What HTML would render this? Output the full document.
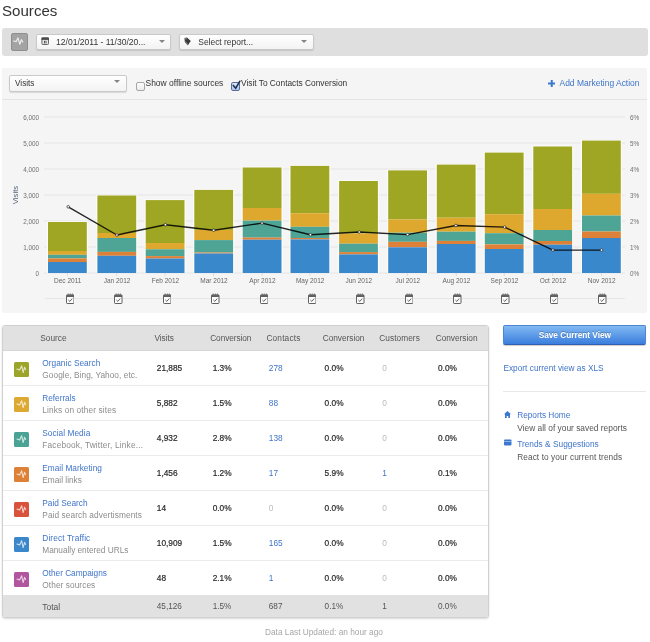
<!DOCTYPE html>
<html><head><meta charset="utf-8">
<style>
html,body{margin:0;padding:0;background:#fff;}
body{width:650px;height:642px;position:relative;overflow:hidden;font-family:"Liberation Sans",sans-serif;}
.t{position:absolute;white-space:nowrap;}
.dd{position:absolute;background:linear-gradient(#ffffff,#f3f3f3);border:1px solid #c9c9c9;border-radius:2px;box-shadow:0 1px 1px rgba(0,0,0,0.12);box-sizing:border-box;}
.arr{position:absolute;width:0;height:0;border-left:3px solid transparent;border-right:3px solid transparent;border-top:3.8px solid #858585;}
</style></head><body><div id="wrap" style="position:absolute;left:0;top:0;width:650px;height:642px;filter:blur(0.55px)">
<div class="t" style="left:2.00px;top:3.02px;font-size:15.1px;line-height:15.1px;color:#333;font-weight:400;">Sources</div>
<div style="position:absolute;left:2px;top:28px;width:646px;height:28px;background:#dfdfdf;border-radius:3px"></div>
<div style="position:absolute;left:11px;top:33px;width:17px;height:18px;background:#a3a3a3;border:1px solid #8e8e8e;border-radius:2px;box-sizing:border-box"><svg width="17" height="18" viewBox="0 0 17 18" style="position:absolute;left:-1px;top:-1px"><path d="M2.6 8 L5.2 8.6 L6.9 4.9 L8.8 11.2 L10.3 6.7 L11.8 9" fill="none" stroke="#ececec" stroke-width="1.2" stroke-linejoin="round" stroke-linecap="round"/></svg></div>
<div class="dd" style="left:35.5px;top:33.5px;width:135px;height:16px"></div>
<svg style="position:absolute;left:41px;top:37px" width="8" height="8" viewBox="0 0 8 8"><rect x="0.9" y="0.9" width="6.6" height="6.6" rx="0.8" fill="#e4e4e4" stroke="#5a5a5a" stroke-width="0.9"/><rect x="0.5" y="0.5" width="7.4" height="2.4" fill="#4a4a4a"/><rect x="3.2" y="3.8" width="0.8" height="2.6" fill="#333"/><rect x="4.6" y="3.8" width="0.8" height="2.6" fill="#333"/></svg>
<div class="t" style="left:56.00px;top:38.36px;font-size:8.55px;line-height:8.55px;color:#333;font-weight:400;">12/01/2011 - 11/30/20...</div>
<div class="arr" style="left:159px;top:39.8px"></div>
<div class="dd" style="left:178.5px;top:33.5px;width:135px;height:16px"></div>
<svg style="position:absolute;left:183.5px;top:36.5px" width="8" height="9" viewBox="0 0 8 9"><path d="M0.5 1 L3 0.5 L6.8 4 L3.8 8.3 L0.8 5 Z" fill="#3a3a3a"/><path d="M0.8 5 L3.8 8.3 L4.5 7.3 L1.2 3.8 Z" fill="#777"/><circle cx="2" cy="1.8" r="0.6" fill="#ddd"/></svg>
<div class="t" style="left:198.30px;top:38.46px;font-size:8.44px;line-height:8.44px;color:#333;font-weight:400;">Select report...</div>
<div class="arr" style="left:301px;top:39.8px"></div>
<div style="position:absolute;left:2px;top:68px;width:645px;height:245px;background:#f5f5f5;border-radius:2px"></div>
<div style="position:absolute;left:2px;top:99px;width:645px;height:1px;background:#e4e4e4"></div>
<div class="dd" style="left:9px;top:74.5px;width:117.5px;height:17px"></div>
<div class="t" style="left:15.00px;top:80.16px;font-size:8.2px;line-height:8.2px;color:#333;font-weight:400;">Visits</div>
<div class="arr" style="left:114px;top:80.3px"></div>
<div style="position:absolute;left:136px;top:81.5px;width:9px;height:9px;border:1px solid #a5a5a5;border-radius:2px;background:linear-gradient(#fdfdfd,#ececec);box-sizing:border-box"></div>
<div class="t" style="left:145.50px;top:79.14px;font-size:8.46px;line-height:8.46px;color:#333;font-weight:400;">Show offline sources</div>
<div style="position:absolute;left:231px;top:81.5px;width:9px;height:9px;border:1px solid #5a6c98;border-radius:2px;background:linear-gradient(#dbe9fa,#a9c7ee);box-sizing:border-box"></div>
<svg style="position:absolute;left:231px;top:78px" width="11" height="13" viewBox="0 0 11 13"><path d="M2.3 7.4 L4.7 10.2 L8.9 3.2" fill="none" stroke="#1b2a48" stroke-width="1.5" stroke-linecap="round"/></svg>
<div class="t" style="left:241.00px;top:79.25px;font-size:8.33px;line-height:8.33px;color:#333;font-weight:400;">Visit To Contacts Conversion</div>
<svg style="position:absolute;left:547.5px;top:79.6px" width="7.5" height="7" viewBox="0 0 7.5 7"><rect x="2.75" y="0" width="2" height="7" fill="#3d78d0"/><rect x="0" y="2.5" width="7.5" height="2" fill="#3d78d0"/></svg>
<div class="t" style="left:559.50px;top:79.03px;font-size:8.47px;line-height:8.47px;color:#3d74c8;font-weight:400;">Add Marketing Action</div>
<svg style="position:absolute;left:0;top:0" width="650" height="320" viewBox="0 0 650 320">
<rect x="44" y="272.5" width="581" height="1" fill="#e6e6e6"/>
<rect x="44" y="246.5" width="581" height="1" fill="#e6e6e6"/>
<rect x="44" y="220.5" width="581" height="1" fill="#e6e6e6"/>
<rect x="44" y="194.5" width="581" height="1" fill="#e6e6e6"/>
<rect x="44" y="168.5" width="581" height="1" fill="#e6e6e6"/>
<rect x="44" y="142.5" width="581" height="1" fill="#e6e6e6"/>
<rect x="44" y="116.5" width="581" height="1" fill="#e6e6e6"/>
<rect x="46.90" y="221.40" width="41.00" height="51.60" fill="#fdfdf8"/>
<rect x="48.0" y="222" width="38.8" height="29.00" fill="#9fa623"/>
<rect x="48.0" y="251" width="38.8" height="3.80" fill="#dea82f"/>
<rect x="48.0" y="254.8" width="38.8" height="3.60" fill="#4ea596"/>
<rect x="48.0" y="258.4" width="38.8" height="3.60" fill="#dc8137"/>
<rect x="48.0" y="262" width="38.8" height="11.00" fill="#3a88cc"/>
<rect x="96.30" y="194.90" width="41.00" height="78.10" fill="#fdfdf8"/>
<rect x="97.4" y="195.5" width="38.8" height="37.50" fill="#9fa623"/>
<rect x="97.4" y="233" width="38.8" height="5.00" fill="#dea82f"/>
<rect x="97.4" y="238" width="38.8" height="13.90" fill="#4ea596"/>
<rect x="97.4" y="251.9" width="38.8" height="3.90" fill="#dc8137"/>
<rect x="97.4" y="255.8" width="38.8" height="17.20" fill="#3a88cc"/>
<rect x="144.60" y="199.50" width="41.00" height="73.50" fill="#fdfdf8"/>
<rect x="145.7" y="200.1" width="38.8" height="42.90" fill="#9fa623"/>
<rect x="145.7" y="243" width="38.8" height="6.30" fill="#dea82f"/>
<rect x="145.7" y="249.3" width="38.8" height="6.80" fill="#4ea596"/>
<rect x="145.7" y="256.1" width="38.8" height="2.40" fill="#dc8137"/>
<rect x="145.7" y="258.5" width="38.8" height="14.50" fill="#3a88cc"/>
<rect x="193.20" y="189.30" width="41.00" height="83.70" fill="#fdfdf8"/>
<rect x="194.3" y="189.9" width="38.8" height="40.00" fill="#9fa623"/>
<rect x="194.3" y="229.9" width="38.8" height="10.20" fill="#dea82f"/>
<rect x="194.3" y="240.1" width="38.8" height="12.40" fill="#4ea596"/>
<rect x="194.3" y="252.5" width="38.8" height="1.00" fill="#dc8137"/>
<rect x="194.3" y="253.5" width="38.8" height="19.50" fill="#3a88cc"/>
<rect x="241.60" y="166.90" width="41.00" height="106.10" fill="#fdfdf8"/>
<rect x="242.7" y="167.5" width="38.8" height="40.50" fill="#9fa623"/>
<rect x="242.7" y="208" width="38.8" height="12.60" fill="#dea82f"/>
<rect x="242.7" y="220.6" width="38.8" height="17.00" fill="#4ea596"/>
<rect x="242.7" y="237.6" width="38.8" height="2.10" fill="#dc8137"/>
<rect x="242.7" y="239.7" width="38.8" height="33.30" fill="#3a88cc"/>
<rect x="289.40" y="165.30" width="41.00" height="107.70" fill="#fdfdf8"/>
<rect x="290.5" y="165.9" width="38.8" height="47.30" fill="#9fa623"/>
<rect x="290.5" y="213.2" width="38.8" height="13.60" fill="#dea82f"/>
<rect x="290.5" y="226.8" width="38.8" height="11.20" fill="#4ea596"/>
<rect x="290.5" y="238" width="38.8" height="1.40" fill="#dc8137"/>
<rect x="290.5" y="239.4" width="38.8" height="33.60" fill="#3a88cc"/>
<rect x="338.00" y="180.40" width="41.00" height="92.60" fill="#fdfdf8"/>
<rect x="339.1" y="181" width="38.8" height="52.50" fill="#9fa623"/>
<rect x="339.1" y="233.5" width="38.8" height="10.20" fill="#dea82f"/>
<rect x="339.1" y="243.7" width="38.8" height="8.40" fill="#4ea596"/>
<rect x="339.1" y="252.1" width="38.8" height="2.30" fill="#dc8137"/>
<rect x="339.1" y="254.4" width="38.8" height="18.60" fill="#3a88cc"/>
<rect x="387.10" y="169.80" width="41.00" height="103.20" fill="#fdfdf8"/>
<rect x="388.2" y="170.4" width="38.8" height="49.10" fill="#9fa623"/>
<rect x="388.2" y="219.5" width="38.8" height="13.20" fill="#dea82f"/>
<rect x="388.2" y="232.7" width="38.8" height="9.10" fill="#4ea596"/>
<rect x="388.2" y="241.8" width="38.8" height="5.50" fill="#dc8137"/>
<rect x="388.2" y="247.3" width="38.8" height="25.70" fill="#3a88cc"/>
<rect x="435.70" y="164.00" width="41.00" height="109.00" fill="#fdfdf8"/>
<rect x="436.8" y="164.6" width="38.8" height="53.10" fill="#9fa623"/>
<rect x="436.8" y="217.7" width="38.8" height="14.00" fill="#dea82f"/>
<rect x="436.8" y="231.7" width="38.8" height="9.20" fill="#4ea596"/>
<rect x="436.8" y="240.9" width="38.8" height="3.10" fill="#dc8137"/>
<rect x="436.8" y="244" width="38.8" height="29.00" fill="#3a88cc"/>
<rect x="483.70" y="152.00" width="41.00" height="121.00" fill="#fdfdf8"/>
<rect x="484.8" y="152.6" width="38.8" height="61.60" fill="#9fa623"/>
<rect x="484.8" y="214.2" width="38.8" height="19.00" fill="#dea82f"/>
<rect x="484.8" y="233.2" width="38.8" height="11.20" fill="#4ea596"/>
<rect x="484.8" y="244.4" width="38.8" height="4.60" fill="#dc8137"/>
<rect x="484.8" y="249" width="38.8" height="24.00" fill="#3a88cc"/>
<rect x="532.20" y="145.90" width="41.00" height="127.10" fill="#fdfdf8"/>
<rect x="533.3" y="146.5" width="38.8" height="62.50" fill="#9fa623"/>
<rect x="533.3" y="209" width="38.8" height="21.00" fill="#dea82f"/>
<rect x="533.3" y="230" width="38.8" height="11.00" fill="#4ea596"/>
<rect x="533.3" y="241" width="38.8" height="3.70" fill="#dc8137"/>
<rect x="533.3" y="244.7" width="38.8" height="28.30" fill="#3a88cc"/>
<rect x="580.90" y="140.00" width="41.00" height="133.00" fill="#fdfdf8"/>
<rect x="582.0" y="140.6" width="38.8" height="53.20" fill="#9fa623"/>
<rect x="582.0" y="193.8" width="38.8" height="21.70" fill="#dea82f"/>
<rect x="582.0" y="215.5" width="38.8" height="16.00" fill="#4ea596"/>
<rect x="582.0" y="231.5" width="38.8" height="6.50" fill="#dc8137"/>
<rect x="582.0" y="238" width="38.8" height="35.00" fill="#3a88cc"/>
<polyline points="68.2,206.8 116.9,235 165.4,224.7 213.7,230.3 262,223.1 310.4,234.7 359.2,232 407.6,234.6 455.9,225.5 504.6,227.1 552.9,250.1 601.5,250.1" fill="none" stroke="#000" stroke-opacity="0.85" stroke-width="1.4" stroke-linejoin="round"/>
<circle cx="68.2" cy="206.8" r="1.3" fill="#fff" stroke="#222" stroke-width="0.7"/>
<circle cx="116.9" cy="235" r="1.3" fill="#fff" stroke="#222" stroke-width="0.7"/>
<circle cx="165.4" cy="224.7" r="1.3" fill="#fff" stroke="#222" stroke-width="0.7"/>
<circle cx="213.7" cy="230.3" r="1.3" fill="#fff" stroke="#222" stroke-width="0.7"/>
<circle cx="262" cy="223.1" r="1.3" fill="#fff" stroke="#222" stroke-width="0.7"/>
<circle cx="310.4" cy="234.7" r="1.3" fill="#fff" stroke="#222" stroke-width="0.7"/>
<circle cx="359.2" cy="232" r="1.3" fill="#fff" stroke="#222" stroke-width="0.7"/>
<circle cx="407.6" cy="234.6" r="1.3" fill="#fff" stroke="#222" stroke-width="0.7"/>
<circle cx="455.9" cy="225.5" r="1.3" fill="#fff" stroke="#222" stroke-width="0.7"/>
<circle cx="504.6" cy="227.1" r="1.3" fill="#fff" stroke="#222" stroke-width="0.7"/>
<circle cx="552.9" cy="250.1" r="1.3" fill="#fff" stroke="#222" stroke-width="0.7"/>
<circle cx="601.5" cy="250.1" r="1.3" fill="#fff" stroke="#222" stroke-width="0.7"/>
<rect x="66.90" y="273" width="1" height="3" fill="#dcdcdc"/>
<rect x="116.30" y="273" width="1" height="3" fill="#dcdcdc"/>
<rect x="164.60" y="273" width="1" height="3" fill="#dcdcdc"/>
<rect x="213.20" y="273" width="1" height="3" fill="#dcdcdc"/>
<rect x="261.60" y="273" width="1" height="3" fill="#dcdcdc"/>
<rect x="309.40" y="273" width="1" height="3" fill="#dcdcdc"/>
<rect x="358.00" y="273" width="1" height="3" fill="#dcdcdc"/>
<rect x="407.10" y="273" width="1" height="3" fill="#dcdcdc"/>
<rect x="455.70" y="273" width="1" height="3" fill="#dcdcdc"/>
<rect x="503.70" y="273" width="1" height="3" fill="#dcdcdc"/>
<rect x="552.20" y="273" width="1" height="3" fill="#dcdcdc"/>
<rect x="600.90" y="273" width="1" height="3" fill="#dcdcdc"/>
<rect x="45" y="298" width="580" height="1" fill="#e6e6e6"/>
</svg>
<div class="t" style="right:611.00px;top:271.02px;font-size:6.35px;line-height:6.35px;color:#707070;font-weight:400;text-align:right;">0</div>
<div class="t" style="left:630.00px;top:271.02px;font-size:6.35px;line-height:6.35px;color:#707070;font-weight:400;">0%</div>
<div class="t" style="right:611.00px;top:245.02px;font-size:6.35px;line-height:6.35px;color:#707070;font-weight:400;text-align:right;">1,000</div>
<div class="t" style="left:630.00px;top:245.02px;font-size:6.35px;line-height:6.35px;color:#707070;font-weight:400;">1%</div>
<div class="t" style="right:611.00px;top:219.02px;font-size:6.35px;line-height:6.35px;color:#707070;font-weight:400;text-align:right;">2,000</div>
<div class="t" style="left:630.00px;top:219.02px;font-size:6.35px;line-height:6.35px;color:#707070;font-weight:400;">2%</div>
<div class="t" style="right:611.00px;top:193.02px;font-size:6.35px;line-height:6.35px;color:#707070;font-weight:400;text-align:right;">3,000</div>
<div class="t" style="left:630.00px;top:193.02px;font-size:6.35px;line-height:6.35px;color:#707070;font-weight:400;">3%</div>
<div class="t" style="right:611.00px;top:167.02px;font-size:6.35px;line-height:6.35px;color:#707070;font-weight:400;text-align:right;">4,000</div>
<div class="t" style="left:630.00px;top:167.02px;font-size:6.35px;line-height:6.35px;color:#707070;font-weight:400;">4%</div>
<div class="t" style="right:611.00px;top:141.02px;font-size:6.35px;line-height:6.35px;color:#707070;font-weight:400;text-align:right;">5,000</div>
<div class="t" style="left:630.00px;top:141.02px;font-size:6.35px;line-height:6.35px;color:#707070;font-weight:400;">5%</div>
<div class="t" style="right:611.00px;top:115.02px;font-size:6.35px;line-height:6.35px;color:#707070;font-weight:400;text-align:right;">6,000</div>
<div class="t" style="left:630.00px;top:115.02px;font-size:6.35px;line-height:6.35px;color:#707070;font-weight:400;">6%</div>
<div class="t" style="left:1.1px;top:190.5px;width:30px;height:8px;font-size:7.8px;line-height:8px;color:#56667c;text-align:center;transform:rotate(-90deg);transform-origin:15px 4px">Visits</div>
<div class="t" style="left:-32.30px;width:200px;top:278.30px;font-size:6.5px;line-height:6.5px;color:#666;font-weight:400;text-align:center;">Dec 2011</div>
<svg style="position:absolute;left:65.95px;top:293px" width="8.5" height="11" viewBox="0 0 8.5 11"><rect x="-0.5" y="1" width="9.5" height="10" fill="#f5f5f5"/><rect x="0.5" y="1.9" width="7.5" height="8.6" rx="0.7" fill="#fbfbfb" stroke="#606060" stroke-width="1"/><rect x="0.5" y="1.9" width="7.5" height="2.1" fill="#606060"/><rect x="1.7" y="0.5" width="0.9" height="2" fill="#707070"/><rect x="3.8" y="0.5" width="0.9" height="2" fill="#707070"/><rect x="5.9" y="0.5" width="0.9" height="2" fill="#707070"/><path d="M2.4 7 L3.8 8.4 L6.2 5.6" fill="none" stroke="#505050" stroke-width="0.9"/></svg>
<div class="t" style="left:17.10px;width:200px;top:278.30px;font-size:6.5px;line-height:6.5px;color:#666;font-weight:400;text-align:center;">Jan 2012</div>
<svg style="position:absolute;left:114.34px;top:293px" width="8.5" height="11" viewBox="0 0 8.5 11"><rect x="-0.5" y="1" width="9.5" height="10" fill="#f5f5f5"/><rect x="0.5" y="1.9" width="7.5" height="8.6" rx="0.7" fill="#fbfbfb" stroke="#606060" stroke-width="1"/><rect x="0.5" y="1.9" width="7.5" height="2.1" fill="#606060"/><rect x="1.7" y="0.5" width="0.9" height="2" fill="#707070"/><rect x="3.8" y="0.5" width="0.9" height="2" fill="#707070"/><rect x="5.9" y="0.5" width="0.9" height="2" fill="#707070"/><path d="M2.4 7 L3.8 8.4 L6.2 5.6" fill="none" stroke="#505050" stroke-width="0.9"/></svg>
<div class="t" style="left:65.40px;width:200px;top:278.30px;font-size:6.5px;line-height:6.5px;color:#666;font-weight:400;text-align:center;">Feb 2012</div>
<svg style="position:absolute;left:162.73px;top:293px" width="8.5" height="11" viewBox="0 0 8.5 11"><rect x="-0.5" y="1" width="9.5" height="10" fill="#f5f5f5"/><rect x="0.5" y="1.9" width="7.5" height="8.6" rx="0.7" fill="#fbfbfb" stroke="#606060" stroke-width="1"/><rect x="0.5" y="1.9" width="7.5" height="2.1" fill="#606060"/><rect x="1.7" y="0.5" width="0.9" height="2" fill="#707070"/><rect x="3.8" y="0.5" width="0.9" height="2" fill="#707070"/><rect x="5.9" y="0.5" width="0.9" height="2" fill="#707070"/><path d="M2.4 7 L3.8 8.4 L6.2 5.6" fill="none" stroke="#505050" stroke-width="0.9"/></svg>
<div class="t" style="left:114.00px;width:200px;top:278.30px;font-size:6.5px;line-height:6.5px;color:#666;font-weight:400;text-align:center;">Mar 2012</div>
<svg style="position:absolute;left:211.12px;top:293px" width="8.5" height="11" viewBox="0 0 8.5 11"><rect x="-0.5" y="1" width="9.5" height="10" fill="#f5f5f5"/><rect x="0.5" y="1.9" width="7.5" height="8.6" rx="0.7" fill="#fbfbfb" stroke="#606060" stroke-width="1"/><rect x="0.5" y="1.9" width="7.5" height="2.1" fill="#606060"/><rect x="1.7" y="0.5" width="0.9" height="2" fill="#707070"/><rect x="3.8" y="0.5" width="0.9" height="2" fill="#707070"/><rect x="5.9" y="0.5" width="0.9" height="2" fill="#707070"/><path d="M2.4 7 L3.8 8.4 L6.2 5.6" fill="none" stroke="#505050" stroke-width="0.9"/></svg>
<div class="t" style="left:162.40px;width:200px;top:278.30px;font-size:6.5px;line-height:6.5px;color:#666;font-weight:400;text-align:center;">Apr 2012</div>
<svg style="position:absolute;left:259.51px;top:293px" width="8.5" height="11" viewBox="0 0 8.5 11"><rect x="-0.5" y="1" width="9.5" height="10" fill="#f5f5f5"/><rect x="0.5" y="1.9" width="7.5" height="8.6" rx="0.7" fill="#fbfbfb" stroke="#606060" stroke-width="1"/><rect x="0.5" y="1.9" width="7.5" height="2.1" fill="#606060"/><rect x="1.7" y="0.5" width="0.9" height="2" fill="#707070"/><rect x="3.8" y="0.5" width="0.9" height="2" fill="#707070"/><rect x="5.9" y="0.5" width="0.9" height="2" fill="#707070"/><path d="M2.4 7 L3.8 8.4 L6.2 5.6" fill="none" stroke="#505050" stroke-width="0.9"/></svg>
<div class="t" style="left:210.20px;width:200px;top:278.30px;font-size:6.5px;line-height:6.5px;color:#666;font-weight:400;text-align:center;">May 2012</div>
<svg style="position:absolute;left:307.90px;top:293px" width="8.5" height="11" viewBox="0 0 8.5 11"><rect x="-0.5" y="1" width="9.5" height="10" fill="#f5f5f5"/><rect x="0.5" y="1.9" width="7.5" height="8.6" rx="0.7" fill="#fbfbfb" stroke="#606060" stroke-width="1"/><rect x="0.5" y="1.9" width="7.5" height="2.1" fill="#606060"/><rect x="1.7" y="0.5" width="0.9" height="2" fill="#707070"/><rect x="3.8" y="0.5" width="0.9" height="2" fill="#707070"/><rect x="5.9" y="0.5" width="0.9" height="2" fill="#707070"/><path d="M2.4 7 L3.8 8.4 L6.2 5.6" fill="none" stroke="#505050" stroke-width="0.9"/></svg>
<div class="t" style="left:258.80px;width:200px;top:278.30px;font-size:6.5px;line-height:6.5px;color:#666;font-weight:400;text-align:center;">Jun 2012</div>
<svg style="position:absolute;left:356.29px;top:293px" width="8.5" height="11" viewBox="0 0 8.5 11"><rect x="-0.5" y="1" width="9.5" height="10" fill="#f5f5f5"/><rect x="0.5" y="1.9" width="7.5" height="8.6" rx="0.7" fill="#fbfbfb" stroke="#606060" stroke-width="1"/><rect x="0.5" y="1.9" width="7.5" height="2.1" fill="#606060"/><rect x="1.7" y="0.5" width="0.9" height="2" fill="#707070"/><rect x="3.8" y="0.5" width="0.9" height="2" fill="#707070"/><rect x="5.9" y="0.5" width="0.9" height="2" fill="#707070"/><path d="M2.4 7 L3.8 8.4 L6.2 5.6" fill="none" stroke="#505050" stroke-width="0.9"/></svg>
<div class="t" style="left:307.90px;width:200px;top:278.30px;font-size:6.5px;line-height:6.5px;color:#666;font-weight:400;text-align:center;">Jul 2012</div>
<svg style="position:absolute;left:404.68px;top:293px" width="8.5" height="11" viewBox="0 0 8.5 11"><rect x="-0.5" y="1" width="9.5" height="10" fill="#f5f5f5"/><rect x="0.5" y="1.9" width="7.5" height="8.6" rx="0.7" fill="#fbfbfb" stroke="#606060" stroke-width="1"/><rect x="0.5" y="1.9" width="7.5" height="2.1" fill="#606060"/><rect x="1.7" y="0.5" width="0.9" height="2" fill="#707070"/><rect x="3.8" y="0.5" width="0.9" height="2" fill="#707070"/><rect x="5.9" y="0.5" width="0.9" height="2" fill="#707070"/><path d="M2.4 7 L3.8 8.4 L6.2 5.6" fill="none" stroke="#505050" stroke-width="0.9"/></svg>
<div class="t" style="left:356.50px;width:200px;top:278.30px;font-size:6.5px;line-height:6.5px;color:#666;font-weight:400;text-align:center;">Aug 2012</div>
<svg style="position:absolute;left:453.07px;top:293px" width="8.5" height="11" viewBox="0 0 8.5 11"><rect x="-0.5" y="1" width="9.5" height="10" fill="#f5f5f5"/><rect x="0.5" y="1.9" width="7.5" height="8.6" rx="0.7" fill="#fbfbfb" stroke="#606060" stroke-width="1"/><rect x="0.5" y="1.9" width="7.5" height="2.1" fill="#606060"/><rect x="1.7" y="0.5" width="0.9" height="2" fill="#707070"/><rect x="3.8" y="0.5" width="0.9" height="2" fill="#707070"/><rect x="5.9" y="0.5" width="0.9" height="2" fill="#707070"/><path d="M2.4 7 L3.8 8.4 L6.2 5.6" fill="none" stroke="#505050" stroke-width="0.9"/></svg>
<div class="t" style="left:404.50px;width:200px;top:278.30px;font-size:6.5px;line-height:6.5px;color:#666;font-weight:400;text-align:center;">Sep 2012</div>
<svg style="position:absolute;left:501.46px;top:293px" width="8.5" height="11" viewBox="0 0 8.5 11"><rect x="-0.5" y="1" width="9.5" height="10" fill="#f5f5f5"/><rect x="0.5" y="1.9" width="7.5" height="8.6" rx="0.7" fill="#fbfbfb" stroke="#606060" stroke-width="1"/><rect x="0.5" y="1.9" width="7.5" height="2.1" fill="#606060"/><rect x="1.7" y="0.5" width="0.9" height="2" fill="#707070"/><rect x="3.8" y="0.5" width="0.9" height="2" fill="#707070"/><rect x="5.9" y="0.5" width="0.9" height="2" fill="#707070"/><path d="M2.4 7 L3.8 8.4 L6.2 5.6" fill="none" stroke="#505050" stroke-width="0.9"/></svg>
<div class="t" style="left:453.00px;width:200px;top:278.30px;font-size:6.5px;line-height:6.5px;color:#666;font-weight:400;text-align:center;">Oct 2012</div>
<svg style="position:absolute;left:549.85px;top:293px" width="8.5" height="11" viewBox="0 0 8.5 11"><rect x="-0.5" y="1" width="9.5" height="10" fill="#f5f5f5"/><rect x="0.5" y="1.9" width="7.5" height="8.6" rx="0.7" fill="#fbfbfb" stroke="#606060" stroke-width="1"/><rect x="0.5" y="1.9" width="7.5" height="2.1" fill="#606060"/><rect x="1.7" y="0.5" width="0.9" height="2" fill="#707070"/><rect x="3.8" y="0.5" width="0.9" height="2" fill="#707070"/><rect x="5.9" y="0.5" width="0.9" height="2" fill="#707070"/><path d="M2.4 7 L3.8 8.4 L6.2 5.6" fill="none" stroke="#505050" stroke-width="0.9"/></svg>
<div class="t" style="left:501.70px;width:200px;top:278.30px;font-size:6.5px;line-height:6.5px;color:#666;font-weight:400;text-align:center;">Nov 2012</div>
<svg style="position:absolute;left:598.24px;top:293px" width="8.5" height="11" viewBox="0 0 8.5 11"><rect x="-0.5" y="1" width="9.5" height="10" fill="#f5f5f5"/><rect x="0.5" y="1.9" width="7.5" height="8.6" rx="0.7" fill="#fbfbfb" stroke="#606060" stroke-width="1"/><rect x="0.5" y="1.9" width="7.5" height="2.1" fill="#606060"/><rect x="1.7" y="0.5" width="0.9" height="2" fill="#707070"/><rect x="3.8" y="0.5" width="0.9" height="2" fill="#707070"/><rect x="5.9" y="0.5" width="0.9" height="2" fill="#707070"/><path d="M2.4 7 L3.8 8.4 L6.2 5.6" fill="none" stroke="#505050" stroke-width="0.9"/></svg>
<div style="position:absolute;left:2px;top:324.5px;width:486.5px;height:293px;background:#fff;border:1px solid #d0d0d0;border-radius:3px;box-shadow:0 1px 2px rgba(0,0,0,0.15);box-sizing:border-box;overflow:hidden"><div style="position:absolute;left:0;top:0;width:100%;height:24px;background:#e1e1e1;border-bottom:1px solid #d6d6d6"></div><div style="position:absolute;left:0;top:269px;width:100%;height:23px;background:#e1e1e1"></div></div>
<div class="t" style="left:40.30px;top:333.77px;font-size:8.3px;line-height:8.3px;color:#555;font-weight:400;letter-spacing:-0.007px;">Source</div>
<div class="t" style="left:154.40px;top:333.77px;font-size:8.3px;line-height:8.3px;color:#555;font-weight:400;letter-spacing:-0.025px;">Visits</div>
<div class="t" style="left:210.20px;top:333.77px;font-size:8.3px;line-height:8.3px;color:#555;font-weight:400;letter-spacing:-0.078px;">Conversion</div>
<div class="t" style="left:266.40px;top:333.77px;font-size:8.3px;line-height:8.3px;color:#555;font-weight:400;letter-spacing:0.173px;">Contacts</div>
<div class="t" style="left:322.70px;top:333.77px;font-size:8.3px;line-height:8.3px;color:#555;font-weight:400;letter-spacing:-0.023px;">Conversion</div>
<div class="t" style="left:379.20px;top:333.77px;font-size:8.3px;line-height:8.3px;color:#555;font-weight:400;letter-spacing:0.067px;">Customers</div>
<div class="t" style="left:435.70px;top:333.77px;font-size:8.3px;line-height:8.3px;color:#555;font-weight:400;letter-spacing:-0.012px;">Conversion</div>
<div style="position:absolute;left:13.5px;top:362px;width:15.4px;height:15.2px;background:#9ca42a;border-radius:1.5px;box-sizing:border-box"><svg width="15.4" height="15.2" viewBox="0 0 15 15" style="position:absolute;left:0;top:0" preserveAspectRatio="none"><path d="M2.9 7 L5.5 7.8 L7.5 3.7 L8.9 10.4 L10.3 5.3 L11.3 7.3" fill="none" stroke="#fff" stroke-width="1.1" stroke-linejoin="round" stroke-linecap="round" opacity="0.72"/></svg></div>
<div class="t" style="left:42.30px;top:359.47px;font-size:8.3px;line-height:8.3px;color:#3f74c9;font-weight:400;letter-spacing:0.031px;">Organic Search</div>
<div class="t" style="left:42.30px;top:371.27px;font-size:8.3px;line-height:8.3px;color:#8c8c8c;font-weight:400;letter-spacing:0.049px;">Google, Bing, Yahoo, etc.</div>
<div class="t" style="left:156.80px;top:364.37px;font-size:8.3px;line-height:8.3px;color:#2a2a2a;font-weight:400;-webkit-text-stroke:0.2px #2a2a2a;">21,885</div>
<div class="t" style="left:212.70px;top:364.37px;font-size:8.3px;line-height:8.3px;color:#2a2a2a;font-weight:400;-webkit-text-stroke:0.2px #2a2a2a;">1.3%</div>
<div class="t" style="left:268.80px;top:364.37px;font-size:8.3px;line-height:8.3px;color:#3f74c9;font-weight:400;">278</div>
<div class="t" style="left:324.60px;top:364.37px;font-size:8.3px;line-height:8.3px;color:#2a2a2a;font-weight:400;-webkit-text-stroke:0.2px #2a2a2a;">0.0%</div>
<div class="t" style="left:382.30px;top:364.37px;font-size:8.3px;line-height:8.3px;color:#bbb;font-weight:400;">0</div>
<div class="t" style="left:438.00px;top:364.37px;font-size:8.3px;line-height:8.3px;color:#2a2a2a;font-weight:400;-webkit-text-stroke:0.2px #2a2a2a;">0.0%</div>
<div style="position:absolute;left:3px;top:384.5px;width:484.5px;height:1px;background:#ebebeb"></div>
<div style="position:absolute;left:13.5px;top:397px;width:15.4px;height:15.2px;background:#dcaa32;border-radius:1.5px;box-sizing:border-box"><svg width="15.4" height="15.2" viewBox="0 0 15 15" style="position:absolute;left:0;top:0" preserveAspectRatio="none"><path d="M2.9 7 L5.5 7.8 L7.5 3.7 L8.9 10.4 L10.3 5.3 L11.3 7.3" fill="none" stroke="#fff" stroke-width="1.1" stroke-linejoin="round" stroke-linecap="round" opacity="0.72"/></svg></div>
<div class="t" style="left:42.30px;top:394.47px;font-size:8.3px;line-height:8.3px;color:#3f74c9;font-weight:400;letter-spacing:-0.038px;">Referrals</div>
<div class="t" style="left:42.30px;top:406.27px;font-size:8.3px;line-height:8.3px;color:#8c8c8c;font-weight:400;letter-spacing:0.120px;">Links on other sites</div>
<div class="t" style="left:156.80px;top:399.37px;font-size:8.3px;line-height:8.3px;color:#2a2a2a;font-weight:400;-webkit-text-stroke:0.2px #2a2a2a;">5,882</div>
<div class="t" style="left:212.70px;top:399.37px;font-size:8.3px;line-height:8.3px;color:#2a2a2a;font-weight:400;-webkit-text-stroke:0.2px #2a2a2a;">1.5%</div>
<div class="t" style="left:268.80px;top:399.37px;font-size:8.3px;line-height:8.3px;color:#3f74c9;font-weight:400;">88</div>
<div class="t" style="left:324.60px;top:399.37px;font-size:8.3px;line-height:8.3px;color:#2a2a2a;font-weight:400;-webkit-text-stroke:0.2px #2a2a2a;">0.0%</div>
<div class="t" style="left:382.30px;top:399.37px;font-size:8.3px;line-height:8.3px;color:#bbb;font-weight:400;">0</div>
<div class="t" style="left:438.00px;top:399.37px;font-size:8.3px;line-height:8.3px;color:#2a2a2a;font-weight:400;-webkit-text-stroke:0.2px #2a2a2a;">0.0%</div>
<div style="position:absolute;left:3px;top:419.5px;width:484.5px;height:1px;background:#ebebeb"></div>
<div style="position:absolute;left:13.5px;top:432px;width:15.4px;height:15.2px;background:#4aa394;border-radius:1.5px;box-sizing:border-box"><svg width="15.4" height="15.2" viewBox="0 0 15 15" style="position:absolute;left:0;top:0" preserveAspectRatio="none"><path d="M2.9 7 L5.5 7.8 L7.5 3.7 L8.9 10.4 L10.3 5.3 L11.3 7.3" fill="none" stroke="#fff" stroke-width="1.1" stroke-linejoin="round" stroke-linecap="round" opacity="0.72"/></svg></div>
<div class="t" style="left:42.30px;top:429.47px;font-size:8.3px;line-height:8.3px;color:#3f74c9;font-weight:400;letter-spacing:0.041px;">Social Media</div>
<div class="t" style="left:42.30px;top:441.27px;font-size:8.3px;line-height:8.3px;color:#8c8c8c;font-weight:400;letter-spacing:0.170px;">Facebook, Twitter, Linke...</div>
<div class="t" style="left:156.80px;top:434.37px;font-size:8.3px;line-height:8.3px;color:#2a2a2a;font-weight:400;-webkit-text-stroke:0.2px #2a2a2a;">4,932</div>
<div class="t" style="left:212.70px;top:434.37px;font-size:8.3px;line-height:8.3px;color:#2a2a2a;font-weight:400;-webkit-text-stroke:0.2px #2a2a2a;">2.8%</div>
<div class="t" style="left:268.80px;top:434.37px;font-size:8.3px;line-height:8.3px;color:#3f74c9;font-weight:400;">138</div>
<div class="t" style="left:324.60px;top:434.37px;font-size:8.3px;line-height:8.3px;color:#2a2a2a;font-weight:400;-webkit-text-stroke:0.2px #2a2a2a;">0.0%</div>
<div class="t" style="left:382.30px;top:434.37px;font-size:8.3px;line-height:8.3px;color:#bbb;font-weight:400;">0</div>
<div class="t" style="left:438.00px;top:434.37px;font-size:8.3px;line-height:8.3px;color:#2a2a2a;font-weight:400;-webkit-text-stroke:0.2px #2a2a2a;">0.0%</div>
<div style="position:absolute;left:3px;top:454.5px;width:484.5px;height:1px;background:#ebebeb"></div>
<div style="position:absolute;left:13.5px;top:467px;width:15.4px;height:15.2px;background:#dc8136;border-radius:1.5px;box-sizing:border-box"><svg width="15.4" height="15.2" viewBox="0 0 15 15" style="position:absolute;left:0;top:0" preserveAspectRatio="none"><path d="M2.9 7 L5.5 7.8 L7.5 3.7 L8.9 10.4 L10.3 5.3 L11.3 7.3" fill="none" stroke="#fff" stroke-width="1.1" stroke-linejoin="round" stroke-linecap="round" opacity="0.72"/></svg></div>
<div class="t" style="left:42.30px;top:464.47px;font-size:8.3px;line-height:8.3px;color:#3f74c9;font-weight:400;letter-spacing:0.006px;">Email Marketing</div>
<div class="t" style="left:42.30px;top:476.27px;font-size:8.3px;line-height:8.3px;color:#8c8c8c;font-weight:400;letter-spacing:-0.009px;">Email links</div>
<div class="t" style="left:156.80px;top:469.37px;font-size:8.3px;line-height:8.3px;color:#2a2a2a;font-weight:400;-webkit-text-stroke:0.2px #2a2a2a;">1,456</div>
<div class="t" style="left:212.70px;top:469.37px;font-size:8.3px;line-height:8.3px;color:#2a2a2a;font-weight:400;-webkit-text-stroke:0.2px #2a2a2a;">1.2%</div>
<div class="t" style="left:268.80px;top:469.37px;font-size:8.3px;line-height:8.3px;color:#3f74c9;font-weight:400;">17</div>
<div class="t" style="left:324.60px;top:469.37px;font-size:8.3px;line-height:8.3px;color:#2a2a2a;font-weight:400;-webkit-text-stroke:0.2px #2a2a2a;">5.9%</div>
<div class="t" style="left:382.30px;top:469.37px;font-size:8.3px;line-height:8.3px;color:#3f74c9;font-weight:400;">1</div>
<div class="t" style="left:438.00px;top:469.37px;font-size:8.3px;line-height:8.3px;color:#2a2a2a;font-weight:400;-webkit-text-stroke:0.2px #2a2a2a;">0.1%</div>
<div style="position:absolute;left:3px;top:489.5px;width:484.5px;height:1px;background:#ebebeb"></div>
<div style="position:absolute;left:13.5px;top:502px;width:15.4px;height:15.2px;background:#d9533c;border-radius:1.5px;box-sizing:border-box"><svg width="15.4" height="15.2" viewBox="0 0 15 15" style="position:absolute;left:0;top:0" preserveAspectRatio="none"><path d="M2.9 7 L5.5 7.8 L7.5 3.7 L8.9 10.4 L10.3 5.3 L11.3 7.3" fill="none" stroke="#fff" stroke-width="1.1" stroke-linejoin="round" stroke-linecap="round" opacity="0.72"/></svg></div>
<div class="t" style="left:42.30px;top:499.47px;font-size:8.3px;line-height:8.3px;color:#3f74c9;font-weight:400;letter-spacing:0.006px;">Paid Search</div>
<div class="t" style="left:42.30px;top:511.27px;font-size:8.3px;line-height:8.3px;color:#8c8c8c;font-weight:400;letter-spacing:0.075px;">Paid search advertisments</div>
<div class="t" style="left:156.80px;top:504.37px;font-size:8.3px;line-height:8.3px;color:#2a2a2a;font-weight:400;-webkit-text-stroke:0.2px #2a2a2a;">14</div>
<div class="t" style="left:212.70px;top:504.37px;font-size:8.3px;line-height:8.3px;color:#2a2a2a;font-weight:400;-webkit-text-stroke:0.2px #2a2a2a;">0.0%</div>
<div class="t" style="left:268.80px;top:504.37px;font-size:8.3px;line-height:8.3px;color:#bbb;font-weight:400;">0</div>
<div class="t" style="left:324.60px;top:504.37px;font-size:8.3px;line-height:8.3px;color:#2a2a2a;font-weight:400;-webkit-text-stroke:0.2px #2a2a2a;">0.0%</div>
<div class="t" style="left:382.30px;top:504.37px;font-size:8.3px;line-height:8.3px;color:#bbb;font-weight:400;">0</div>
<div class="t" style="left:438.00px;top:504.37px;font-size:8.3px;line-height:8.3px;color:#2a2a2a;font-weight:400;-webkit-text-stroke:0.2px #2a2a2a;">0.0%</div>
<div style="position:absolute;left:3px;top:524.5px;width:484.5px;height:1px;background:#ebebeb"></div>
<div style="position:absolute;left:13.5px;top:537px;width:15.4px;height:15.2px;background:#3b87cb;border-radius:1.5px;box-sizing:border-box"><svg width="15.4" height="15.2" viewBox="0 0 15 15" style="position:absolute;left:0;top:0" preserveAspectRatio="none"><path d="M2.9 7 L5.5 7.8 L7.5 3.7 L8.9 10.4 L10.3 5.3 L11.3 7.3" fill="none" stroke="#fff" stroke-width="1.1" stroke-linejoin="round" stroke-linecap="round" opacity="0.72"/></svg></div>
<div class="t" style="left:42.30px;top:534.47px;font-size:8.3px;line-height:8.3px;color:#3f74c9;font-weight:400;letter-spacing:0.119px;">Direct Traffic</div>
<div class="t" style="left:42.30px;top:546.27px;font-size:8.3px;line-height:8.3px;color:#8c8c8c;font-weight:400;letter-spacing:-0.032px;">Manually entered URLs</div>
<div class="t" style="left:156.80px;top:539.37px;font-size:8.3px;line-height:8.3px;color:#2a2a2a;font-weight:400;-webkit-text-stroke:0.2px #2a2a2a;">10,909</div>
<div class="t" style="left:212.70px;top:539.37px;font-size:8.3px;line-height:8.3px;color:#2a2a2a;font-weight:400;-webkit-text-stroke:0.2px #2a2a2a;">1.5%</div>
<div class="t" style="left:268.80px;top:539.37px;font-size:8.3px;line-height:8.3px;color:#3f74c9;font-weight:400;">165</div>
<div class="t" style="left:324.60px;top:539.37px;font-size:8.3px;line-height:8.3px;color:#2a2a2a;font-weight:400;-webkit-text-stroke:0.2px #2a2a2a;">0.0%</div>
<div class="t" style="left:382.30px;top:539.37px;font-size:8.3px;line-height:8.3px;color:#bbb;font-weight:400;">0</div>
<div class="t" style="left:438.00px;top:539.37px;font-size:8.3px;line-height:8.3px;color:#2a2a2a;font-weight:400;-webkit-text-stroke:0.2px #2a2a2a;">0.0%</div>
<div style="position:absolute;left:3px;top:559.5px;width:484.5px;height:1px;background:#ebebeb"></div>
<div style="position:absolute;left:13.5px;top:572px;width:15.4px;height:15.2px;background:#b0559e;border-radius:1.5px;box-sizing:border-box"><svg width="15.4" height="15.2" viewBox="0 0 15 15" style="position:absolute;left:0;top:0" preserveAspectRatio="none"><path d="M2.9 7 L5.5 7.8 L7.5 3.7 L8.9 10.4 L10.3 5.3 L11.3 7.3" fill="none" stroke="#fff" stroke-width="1.1" stroke-linejoin="round" stroke-linecap="round" opacity="0.72"/></svg></div>
<div class="t" style="left:42.30px;top:569.47px;font-size:8.3px;line-height:8.3px;color:#3f74c9;font-weight:400;letter-spacing:-0.033px;">Other Campaigns</div>
<div class="t" style="left:42.30px;top:581.27px;font-size:8.3px;line-height:8.3px;color:#8c8c8c;font-weight:400;letter-spacing:0.071px;">Other sources</div>
<div class="t" style="left:156.80px;top:574.37px;font-size:8.3px;line-height:8.3px;color:#2a2a2a;font-weight:400;-webkit-text-stroke:0.2px #2a2a2a;">48</div>
<div class="t" style="left:212.70px;top:574.37px;font-size:8.3px;line-height:8.3px;color:#2a2a2a;font-weight:400;-webkit-text-stroke:0.2px #2a2a2a;">2.1%</div>
<div class="t" style="left:268.80px;top:574.37px;font-size:8.3px;line-height:8.3px;color:#3f74c9;font-weight:400;">1</div>
<div class="t" style="left:324.60px;top:574.37px;font-size:8.3px;line-height:8.3px;color:#2a2a2a;font-weight:400;-webkit-text-stroke:0.2px #2a2a2a;">0.0%</div>
<div class="t" style="left:382.30px;top:574.37px;font-size:8.3px;line-height:8.3px;color:#bbb;font-weight:400;">0</div>
<div class="t" style="left:438.00px;top:574.37px;font-size:8.3px;line-height:8.3px;color:#2a2a2a;font-weight:400;-webkit-text-stroke:0.2px #2a2a2a;">0.0%</div>
<div class="t" style="left:42.20px;top:602.90px;font-size:8.5px;line-height:8.5px;color:#555;font-weight:400;">Total</div>
<div class="t" style="left:156.80px;top:603.16px;font-size:8.2px;line-height:8.2px;color:#555;font-weight:400;">45,126</div>
<div class="t" style="left:212.70px;top:603.16px;font-size:8.2px;line-height:8.2px;color:#555;font-weight:400;">1.5%</div>
<div class="t" style="left:268.80px;top:603.16px;font-size:8.2px;line-height:8.2px;color:#555;font-weight:400;">687</div>
<div class="t" style="left:324.60px;top:603.16px;font-size:8.2px;line-height:8.2px;color:#555;font-weight:400;">0.1%</div>
<div class="t" style="left:382.30px;top:603.16px;font-size:8.2px;line-height:8.2px;color:#555;font-weight:400;">1</div>
<div class="t" style="left:438.00px;top:603.16px;font-size:8.2px;line-height:8.2px;color:#555;font-weight:400;">0.0%</div>
<div class="t" style="left:265.00px;top:627.68px;font-size:8.29px;line-height:8.29px;color:#a6a6a6;font-weight:400;">Data Last Updated: an hour ago</div>
<div style="position:absolute;left:503px;top:325px;width:143px;height:20px;border-radius:2px;background:linear-gradient(#82baf2,#3a7ddd);border:1px solid #4f86d3;border-bottom-color:#2d5fb3;box-sizing:border-box;box-shadow:0 1px 1px rgba(0,0,0,0.2)"></div>
<div class="t" style="left:538.70px;top:330.87px;font-size:8.3px;line-height:8.3px;color:#fff;font-weight:700;letter-spacing:-0.028px;text-shadow:0 -1px 0 rgba(0,0,0,0.25);">Save Current View</div>
<div class="t" style="left:503.40px;top:363.97px;font-size:8.3px;line-height:8.3px;color:#3f74c9;font-weight:400;letter-spacing:0.007px;">Export current view as XLS</div>
<div style="position:absolute;left:503px;top:391px;width:143px;height:1px;background:#e8e8e8"></div>
<svg style="position:absolute;left:504px;top:411px" width="7" height="7" viewBox="0 0 7 7"><path d="M3.5 0 L7 3.3 L6 3.3 L6 7 L4.3 7 L4.3 5 L2.7 5 L2.7 7 L1 7 L1 3.3 L0 3.3 Z" fill="#3d78d0"/></svg>
<div class="t" style="left:517.20px;top:411.27px;font-size:8.3px;line-height:8.3px;color:#3f74c9;font-weight:400;letter-spacing:-0.031px;">Reports Home</div>
<div class="t" style="left:517.20px;top:424.31px;font-size:8.38px;line-height:8.38px;color:#555;font-weight:400;">View all of your saved reports</div>
<svg style="position:absolute;left:504px;top:439px" width="7.5" height="7" viewBox="0 0 7.5 7"><rect x="0" y="0.5" width="7.5" height="6" rx="1" fill="#3d78d0"/><rect x="0" y="2.2" width="7.5" height="0.7" fill="#fff" opacity="0.6"/></svg>
<div class="t" style="left:517.20px;top:440.07px;font-size:8.3px;line-height:8.3px;color:#3f74c9;font-weight:400;letter-spacing:0.012px;">Trends &amp; Suggestions</div>
<div class="t" style="left:517.20px;top:452.97px;font-size:8.3px;line-height:8.3px;color:#555;font-weight:400;letter-spacing:0.079px;">React to your current trends</div>
</div></body></html>
